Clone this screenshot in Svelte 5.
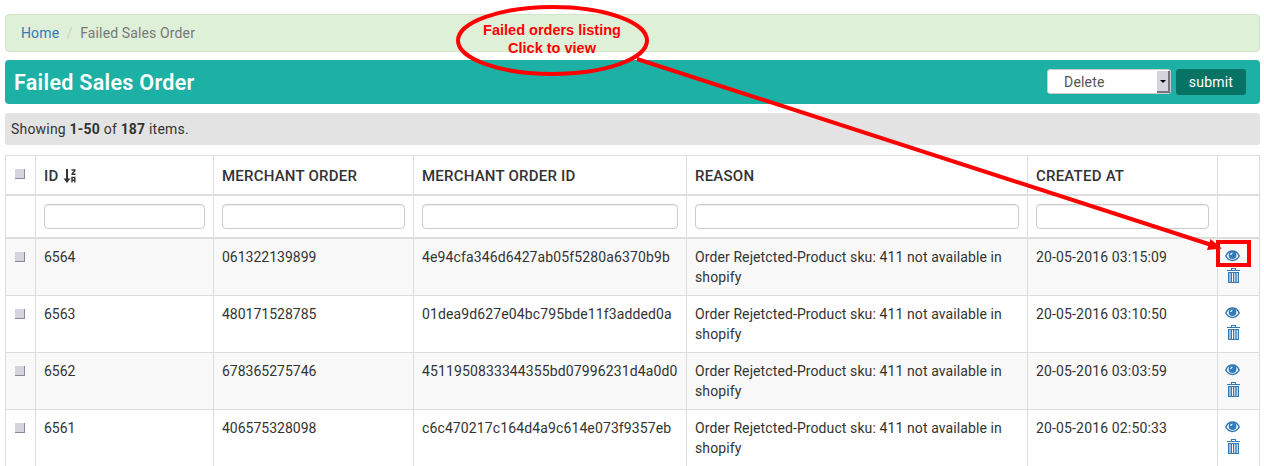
<script>
  const columns = ['MERCHANT ORDER', 'MERCHANT ORDER ID', 'REASON', 'CREATED AT'];
  const reason = 'Order Rejetcted-Product sku: 411 not available in shopify';
  const orders = [
    { id: '6564', order: '061322139899', orderId: '4e94cfa346d6427ab05f5280a6370b9b', created: '20-05-2016 03:15:09' },
    { id: '6563', order: '480171528785', orderId: '01dea9d627e04bc795bde11f3added0a', created: '20-05-2016 03:10:50' },
    { id: '6562', order: '678365275746', orderId: '4511950833344355bd07996231d4a0d0', created: '20-05-2016 03:03:59' },
    { id: '6561', order: '406575328098', orderId: 'c6c470217c164d4a9c614e073f9357eb', created: '20-05-2016 02:50:33' }
  ];
</script>

<main>
  <nav class="breadcrumb"><a href="#home">Home</a><span class="slash">/</span><span>Failed Sales Order</span></nav>

  <header class="title-bar">
    <h1>Failed Sales Order</h1>
    <div class="actions">
      <div class="select"><span>Delete</span><i class="drop"><svg width="6" height="3" viewBox="0 0 6 3"><path d="M0 0h6L3 3z" /></svg></i></div>
      <button>submit</button>
    </div>
  </header>

  <div class="summary">Showing <b>1-50</b> of <b>187</b> items.</div>

  <section class="table">
    <div class="row head">
      <div class="check"><i class="box"></i></div>
      <div>ID
        <svg class="sort" width="12" height="14" viewBox="0 0 12 14">
          <path d="M2 0h2v9.500h2.500L3 14-.5 9.500H2z" />
          <path d="M7.500 1h3.300v1L8.200 4.500v.8H11.500M8 13.500V8.500h2.800v5M8 11.300h2.800" fill="none" stroke="#333" stroke-width="1.4" />
        </svg>
      </div>
      {#each columns as name}<div>{name}</div>{/each}
      <div></div>
    </div>
    <div class="row filters">
      <div></div>
      {#each [1, 2, 3, 4, 5] as n}<div><input aria-label={'Filter ' + n} /></div>{/each}
      <div></div>
    </div>
    {#each orders as o, i}
      <div class="row data" class:odd={i % 2 === 0}>
        <div class="check"><i class="box"></i></div>
        <div>{o.id}</div>
        <div>{o.order}</div>
        <div class="hash">{o.orderId}</div>
        <div class="reason">{reason}</div>
        <div class="date">{o.created}</div>
        <div class="icons">
          <svg width="15" height="12" viewBox="0 0 15 12">
            <path d="M.8 6C2.300 2.700 4.700 1.100 7.500 1.100S12.700 2.700 14.200 6c-1.600 3-4 4.500-6.700 4.500S2.400 9 .8 6z" fill="none" stroke="#337ab7" stroke-width="1.500" />
            <circle cx="7.500" cy="5" r="3.900" />
            <path d="M5.700 5A2 2 0 0 1 7.400 3.100" fill="none" stroke="#fff" stroke-width="1.200" />
          </svg>
          <svg width="13" height="15" viewBox="0 0 13 15">
            <path fill-rule="evenodd" d="M4 0h5v2h4v1H0V2h4zM5 1v1h3V1zM1 4h11v11H1zM2.500 5v9h1V5zM5 5v9h1V5zM7.300 5v9h1V5zM9.700 5v9h1V5z" />
          </svg>
        </div>
      </div>
    {/each}
  </section>

  <svg class="marks" width="1264" height="466" viewBox="0 0 1264 466">
    <ellipse cx="552.500" cy="40.500" rx="94.500" ry="33.500" />
    <path d="M637 59L1210 244.500" />
    <path class="tip" d="M1210.500 239L1222 248.500 1207 250z" />
    <rect x="1218" y="242" width="31" height="23" />
  </svg>
  <p class="note">Failed orders listing<br />Click to view</p>
</main>

<style>
  :global(body) { background: #fff; overflow: hidden; }
  * { box-sizing: border-box; }
  main { position: relative; width: 1264px; height: 466px; overflow: hidden; padding: 14px 4px 0 5px; font: 14px/20px Roboto, sans-serif; color: #333; }
  .breadcrumb { display: flex; height: 38px; padding: 8px 15px; background: #dff0d8; border: 1px solid #d0e6c6; border-radius: 4px; color: #777; letter-spacing: .13px; }
  .breadcrumb a { color: #337ab7; text-decoration: none; }
  .slash { color: #ccc; width: 21px; text-align: center; }
  .title-bar { display: flex; justify-content: space-between; align-items: center; height: 44px; margin-top: 8px; padding: 0 14px 0 9px; background: #1cb1a4; border-radius: 4px; }
  h1 { margin: 2px 0 0; color: #fff; font-size: 21.500px; line-height: 26px; font-weight: 600; letter-spacing: .3px; }
  .actions { display: flex; gap: 5px; }
  .select { display: flex; justify-content: space-between; width: 124px; height: 25px; background: #fff; border: 1px solid #ccc; border-radius: 3px; color: #555; padding: 1px 0 0 16px; line-height: 23px; letter-spacing: .2px; }
  .drop { width: 13px; height: 22px; background: #d4d4de; border: solid #77747d; border-width: 0 2px 2px 0; display: flex; align-items: center; justify-content: center; }
  .drop svg { display: block; }
  button { width: 70px; height: 26px; border: 0; border-radius: 3px; background: #077365; color: #fff; font: 14px/26px Roboto, sans-serif; padding: 0; letter-spacing: .2px; }
  .summary { height: 32px; margin-top: 9px; padding: 6px; background: #e3e3e3; border-radius: 3px; letter-spacing: .2px; }
  .summary b { font-weight: 700; }
  .table { margin-top: 10px; border-top: 1px solid #ddd; }
  .row { display: grid; grid-template-columns: 30px 178px 200px 273px 341px 190px 43px; border-bottom: 1px solid #ddd; }
  .row > div { border-left: 1px solid #ddd; padding: 8px; }
  .row > div:last-child { border-right: 1px solid #ddd; }
  .head { height: 40px; border-bottom-width: 2px; font-size: 15px; font-weight: 500; line-height: 24px; letter-spacing: .22px; }
  .filters { height: 43px; border-bottom-width: 2px; }
  input { display: block; width: 100%; height: 25px; border: 1px solid #ccc; border-radius: 4px; box-shadow: inset 0 1px 1px rgba(0, 0, 0, .075); padding: 0; }
  .data { height: 57px; }
  .hash { letter-spacing: .12px; }
  .reason { letter-spacing: .1px; }
  .date { letter-spacing: .15px; }
  .odd { background: #f9f9f9; }
  .row > .check { padding: 13px 0 0 9px; }
  .box { display: block; width: 10px; height: 10px; background: #d4d4de; border: solid #8a889b; border-width: 0 1px 1px 0; }
  .sort { vertical-align: -2px; margin-left: 1.500px; fill: #333; overflow: visible; }
  .row > .icons { display: flex; flex-direction: column; padding: 11px 7px 0; gap: 6px; fill: #337ab7; }
  .icons svg { display: block; }
  .icons svg + svg { margin-left: 2px; }
  .marks { position: absolute; left: 0; top: 0; fill: none; stroke: #f00; stroke-width: 4; }
  .tip { fill: #f00; stroke: none; }
  .note { position: absolute; left: 457px; top: 21px; width: 190px; margin: 0; text-align: center; color: #f00; font: bold 14.500px/18px "Liberation Sans", sans-serif; }
</style>
